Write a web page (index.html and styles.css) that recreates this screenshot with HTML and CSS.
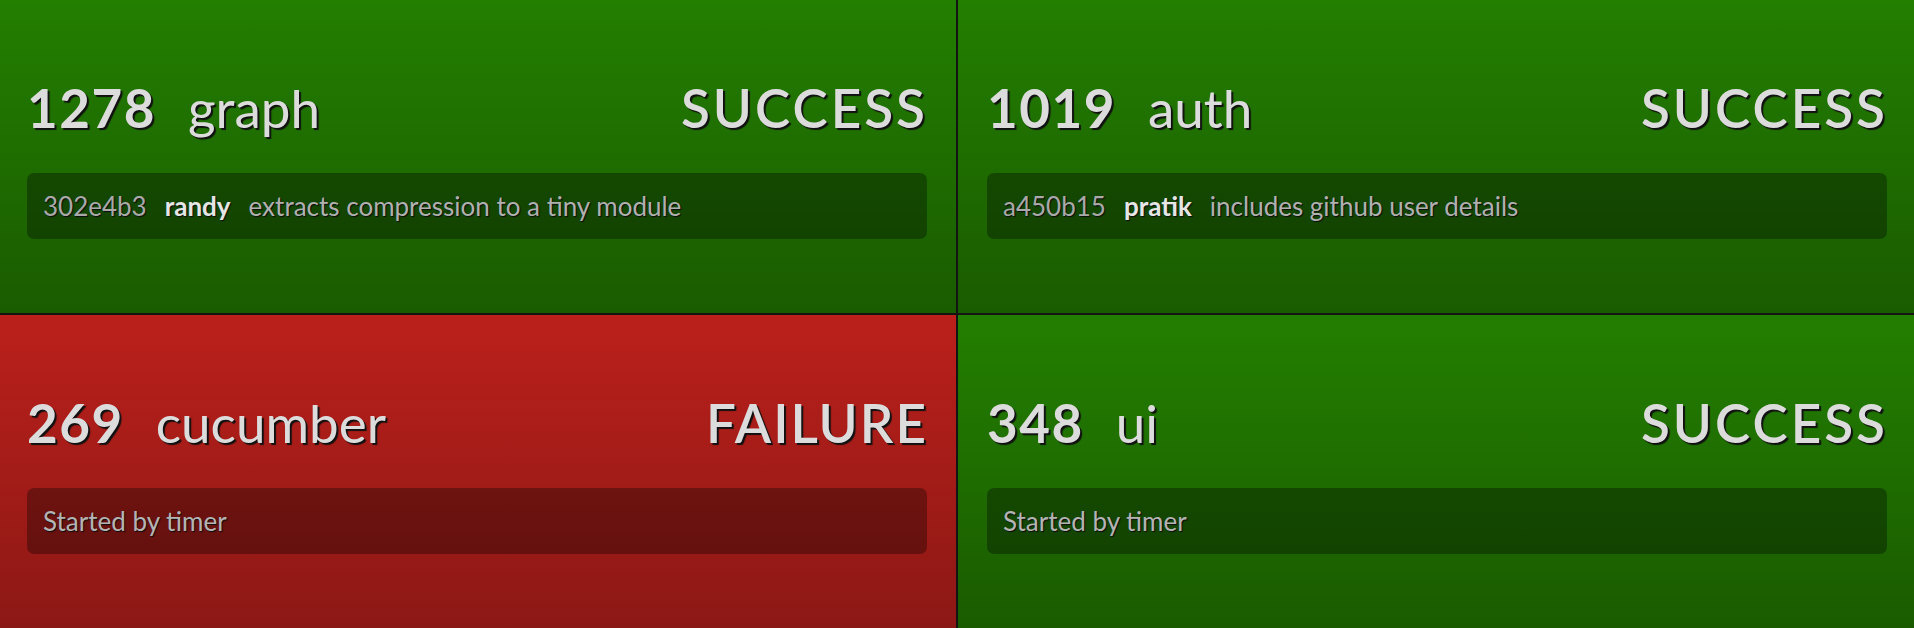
FILE: index.html
```html
<!DOCTYPE html>
<html lang="en">
<head>
<meta charset="utf-8">
<title>Build Monitor</title>
<link rel="stylesheet" href="styles.css">
</head>
<body>
<main class="board">
  <section class="job success col-left">
    <div class="job-head">
      <span class="build-no">1278</span>
      <span class="job-name">graph</span>
      <span class="status">SUCCESS</span>
    </div>
    <div class="details">
      <span class="sha">302e4b3</span>
      <span class="author">randy</span>
      <span class="msg">extracts compression to a tiny module</span>
    </div>
  </section>
  <section class="job success col-right">
    <div class="job-head">
      <span class="build-no">1019</span>
      <span class="job-name">auth</span>
      <span class="status">SUCCESS</span>
    </div>
    <div class="details">
      <span class="sha">a450b15</span>
      <span class="author">pratik</span>
      <span class="msg">includes github user details</span>
    </div>
  </section>
  <section class="job failure col-left">
    <div class="job-head">
      <span class="build-no">269</span>
      <span class="job-name">cucumber</span>
      <span class="status">FAILURE</span>
    </div>
    <div class="details">
      <span class="cause">Started by timer</span>
    </div>
  </section>
  <section class="job success col-right">
    <div class="job-head">
      <span class="build-no">348</span>
      <span class="job-name">ui</span>
      <span class="status">SUCCESS</span>
    </div>
    <div class="details">
      <span class="cause">Started by timer</span>
    </div>
  </section>
</main>
</body>
</html>
```

FILE: styles.css
```css
html, body {
  margin: 0;
  padding: 0;
  height: 100%;
  background: #141414;
  overflow: hidden;
}

body {
  font-family: "Lato", "Open Sans", sans-serif;
}

.board {
  display: grid;
  grid-template-columns: 1fr 1fr;
  grid-template-rows: 1fr 1fr;
  gap: 2px;
  width: 1914px;
  height: 628px;
}

.job {
  display: flex;
  flex-direction: column;
  justify-content: center;
  box-sizing: border-box;
  padding-top: 2px;
}

.col-left {
  padding-left: 27px;
  padding-right: 29px;
}

.col-right {
  padding-left: 29px;
  padding-right: 27px;
}

.success {
  background: linear-gradient(to bottom, #237f00 0%, #1a5b00 100%);
}

.failure {
  background: linear-gradient(to bottom, #bb201b 0%, #8c1815 100%);
}

.job-head {
  display: flex;
  align-items: baseline;
  font-size: 53px;
  line-height: 1.2;
  color: #dcdcdc;
  text-shadow: 2px 2px 1px #111;
}

.build-no {
  font-weight: 700;
  letter-spacing: 1.5px;
  margin-right: 32px;
}

.job-name {
  font-weight: 400;
}

.status {
  margin-left: auto;
  font-weight: 600;
  letter-spacing: 3px;
  margin-right: -1px;
}

.failure .status {
  letter-spacing: 2px;
}

.details {
  display: flex;
  align-items: center;
  height: 66px;
  margin-top: 33px;
  padding: 0 16px;
  border-radius: 7px;
  background: rgba(0, 0, 0, 0.32);
  font-size: 26px;
  color: #a9a9a9;
  text-shadow: 1px 1px 1px #0c0c0c;
  white-space: nowrap;
}

.sha {
  margin-right: 18px;
}

.author {
  font-weight: 700;
  color: #e6e6e6;
  margin-right: 18px;
}

.msg {
  color: #b0b0b0;
}

.cause {
  color: #b4b4b4;
}
```
